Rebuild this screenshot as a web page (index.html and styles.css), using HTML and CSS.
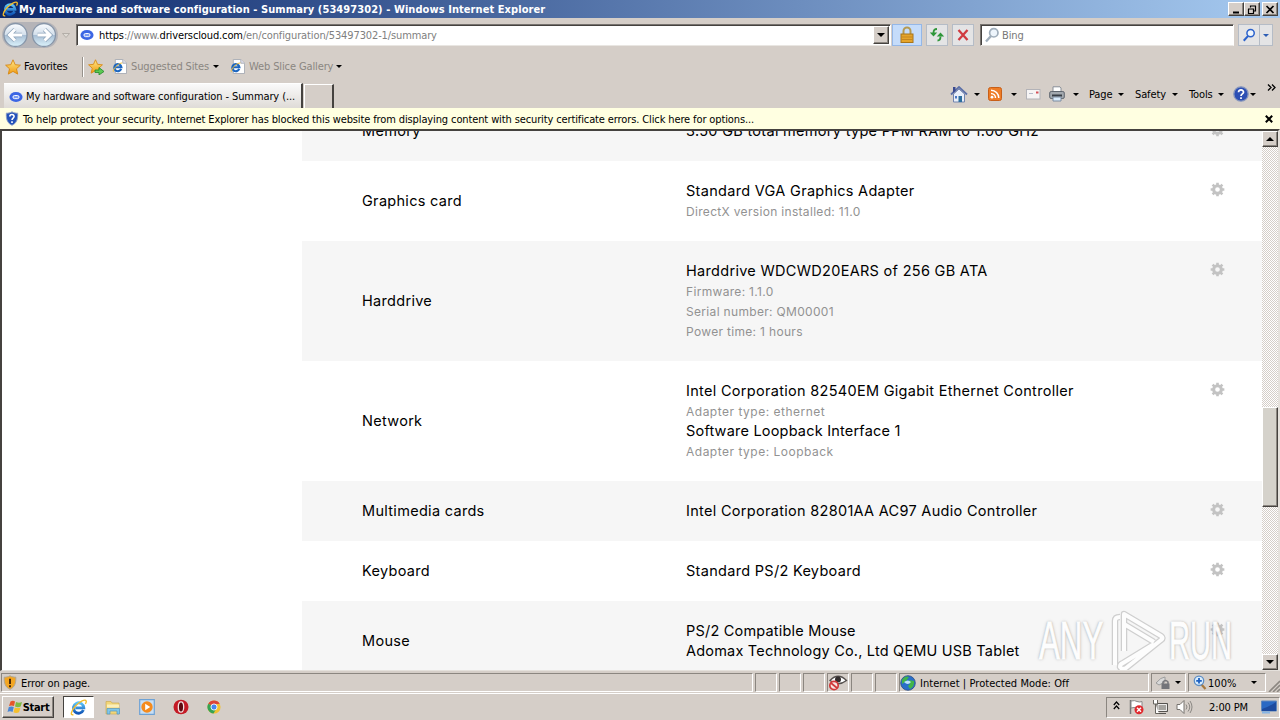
FILE: index.html
```html
<!DOCTYPE html>
<html lang="en">
<head>
    <meta charset="UTF-8">
    <title>My hardware and software configuration - Summary (53497302)</title>
    <link rel="stylesheet" href="styles.css">
</head>
<body>
    <svg class="defs" width="0" height="0">
        <defs>
            <linearGradient id="sky" x1="0" y1="0" x2="0" y2="1">
                <stop offset="0" stop-color="#5cc4f8"/><stop offset="1" stop-color="#1257b8"/>
            </linearGradient>
            <linearGradient id="ball" x1="0" y1="0" x2="0" y2="1">
                <stop offset="0" stop-color="#fbfdff"/><stop offset=".48" stop-color="#d3dfeb"/><stop offset=".52" stop-color="#a9bfd5"/><stop offset="1" stop-color="#dcf3fc"/>
            </linearGradient>
            <linearGradient id="gold" x1="0" y1="0" x2="0" y2="1">
                <stop offset="0" stop-color="#ffe98a"/><stop offset="1" stop-color="#f09a10"/>
            </linearGradient>
        </defs>
        <symbol id="ie" viewBox="0 0 16 16">
            <path d="M12.600 10.400A4.900 4.900 0 1 1 13 8.300H5" fill="none" stroke="url(#sky)" stroke-width="2.700"/>
            <path d="M3.200 14.600C.2 16 .6 11.500 5 6.800 9.200 2.300 14.500-.2 15.200 1.800c.3.8-.1 1.900-.7 2.900" fill="none" stroke="#f3bd2c" stroke-width="1.300"/>
        </symbol>
        <symbol id="iepage" viewBox="0 0 16 16">
            <path d="M3.500.5h8l4 4v11h-12z" fill="#fff" stroke="#a9adb4"/>
            <path d="M11.500.5v4h4" fill="#dde" stroke="#a9adb4"/>
            <path d="M9.800 10.600A3.800 3.800 0 1 1 10 8.800H3" fill="none" stroke="#1c66c0" stroke-width="2.300"/>
            <path d="M1.500 13.500C0 12.500 6 4.200 11 4.200" fill="none" stroke="#f3bd2c"/>
        </symbol>
        <symbol id="cloud" viewBox="0 0 16 12">
            <ellipse cx="8" cy="6" rx="7.500" ry="5.800" fill="#3c66e4"/>
            <rect x="4.500" y="4.300" width="7" height="3.600" rx="1.800" fill="#7e9df2" stroke="#fff" stroke-width="1.100"/>
        </symbol>
        <symbol id="star" viewBox="0 0 16 16">
            <path d="M8 .8l2.200 4.900 5.200.5-3.900 3.600 1.200 5.300L8 12.400l-4.700 2.700 1.200-5.300L.6 6.200l5.200-.5z" fill="url(#gold)" stroke="#d78712" stroke-width=".9"/>
        </symbol>
        <symbol id="shield" viewBox="0 0 14 16">
            <path d="M7 .8C9 2 11 2.400 13.200 2.300 13.500 8.500 12 13 7 15.300 2 13 .5 8.500.8 2.300 3 2.400 5 2 7 .8z" fill="#2453ba" stroke="#98a8c6"/>
            <path d="M4.700 5.800C4.800 3 9.400 3.200 9.200 5.900 9.100 7.500 7 7.600 7 9.500M7 11v1.700" fill="none" stroke="#fff" stroke-width="1.700"/>
        </symbol>
        <symbol id="gear" viewBox="0 0 16 16">
            <path d="M8 .7v3.600M8 11.700v3.600M.7 8h3.600M11.700 8h3.600M2.800 2.800l2.600 2.600M10.600 10.600l2.600 2.600M13.200 2.800l-2.600 2.600M5.400 10.600l-2.600 2.600" stroke="#c3c3c3" stroke-width="2.800"/>
            <circle cx="8" cy="8" r="4.100" fill="none" stroke="#c3c3c3" stroke-width="3.200"/>
        </symbol>
        <symbol id="glass" viewBox="0 0 16 16">
            <path d="M2 14.500L7 9" stroke-width="2.400" stroke="currentColor"/>
            <circle cx="9.800" cy="5.800" r="4.200" fill="#eef5fc" stroke="currentColor" stroke-width="1.700"/>
        </symbol>
    </svg>

    <div class="titlebar">
        <svg class="title-icon" width="16" height="16"><use href="#ie"/></svg>
        <span class="title-text">My hardware and software configuration - Summary (53497302) - Windows Internet Explorer</span>
        <div class="window-buttons">
            <button class="win"><svg width="12" height="11"><path d="M3 8.500h6" stroke="#000" stroke-width="2"/></svg></button>
            <button class="win"><svg width="12" height="11"><path d="M4 2h6M4.500 1.500v2M9.500 2v5H8M2 5h6M2.500 5v4.500h5V5" fill="none" stroke="#000" stroke-width="1.200"/></svg></button>
            <button class="win close"><svg width="12" height="11"><path d="M2.500 2l7 7M9.500 2l-7 7" stroke="#000" stroke-width="1.700"/></svg></button>
        </div>
    </div>

    <div class="address-row">
        <svg class="nav" width="72" height="28" viewBox="0 0 72 28">
            <path d="M14 1h30a13 13 0 0 1 0 26H14a13 13 0 0 1 0-26" fill="#b5b4b8"/>
            <circle cx="14.500" cy="14" r="11.500" fill="url(#ball)" stroke="#8796a9" stroke-width="1.300"/>
            <circle cx="43" cy="14" r="11.500" fill="url(#ball)" stroke="#8796a9" stroke-width="1.300"/>
            <path d="M21 14H9M14 8.500L8.500 14l5.500 5.500M36.500 14h12M43.500 8.500L49 14l-5.500 5.500" fill="none" stroke="#8fa5bb" stroke-width="4.500"/>
            <path d="M21 14H9M14 8.500L8.500 14l5.500 5.500M36.500 14h12M43.500 8.500L49 14l-5.500 5.500" fill="none" stroke="#fff" stroke-width="3"/>
            <path d="M61.500 12.500h7l-3.500 4z" fill="#dedad4" stroke="#aaa59e" stroke-width=".8"/>
        </svg>
        <div class="address">
            <svg width="14" height="12"><use href="#cloud"/></svg>
            <span class="url"><b>https</b>://www.<b>driverscloud.com</b>/en/configuration/53497302-1/summary</span>
            <button class="drop"><i class="arrow"></i></button>
        </div>
        <div class="tool lock">
            <svg width="16" height="18"><path d="M4.500 9V5a3.500 3.500 0 0 1 7 0v4" fill="none" stroke="#b59a52" stroke-width="2"/><rect x="2" y="8" width="12" height="8.500" fill="#e5a42a" stroke="#a8751a"/><path d="M2 11h12M2 13.500h12" stroke="#c58720"/></svg>
        </div>
        <div class="tool">
            <svg width="16" height="16"><path d="M8 2Q4.500 2 4.500 6" fill="none" stroke="#2f963a" stroke-width="1.800"/><path d="M.8 5.500h7.400L4.500 9.500zM7.800 9.500h7.400L11.500 5.500z" fill="#2f963a"/><path d="M8.500 13.500q3 0 3-4" fill="none" stroke="#2f963a" stroke-width="1.800"/></svg>
        </div>
        <div class="tool">
            <svg width="16" height="16"><path d="M3.500 3l9 10M12.500 3l-9 10" stroke="#d03a40" stroke-width="2.300"/></svg>
        </div>
        <div class="search">
            <svg class="pale" width="16" height="18" viewBox="0 0 16 16"><use href="#glass"/></svg>
            <span>Bing</span>
        </div>
        <div class="tool go"><svg width="14" height="14" viewBox="0 0 16 16"><use href="#glass"/></svg></div>
        <div class="tool go-drop"><i class="arrow blue"></i></div>
    </div>

    <div class="favorites-row">
        <svg width="16" height="16"><use href="#star"/></svg>
        <span class="fav">Favorites</span>
        <i class="divider"></i>
        <svg class="add" width="17" height="16"><use href="#star" width="15" height="15"/><path d="M7 11h4V8.500l5 4-5 3.500v-2.500H7z" fill="#5cc953" stroke="#238a2c" stroke-width=".8"/></svg>
        <svg class="page-icon" width="15" height="15"><use href="#iepage"/></svg>
        <span class="link suggested">Suggested Sites</span><i class="arrow"></i>
        <svg class="page-icon second" width="15" height="15"><use href="#iepage"/></svg>
        <span class="link slice">Web Slice Gallery</span><i class="arrow"></i>
    </div>

    <div class="tab-row">
        <div class="tab">
            <svg width="14" height="12"><use href="#cloud"/></svg>
            <span>My hardware and software configuration - Summary (...</span>
        </div>
        <div class="new-tab"></div>
        <div class="commands">
            <svg width="18" height="17"><path d="M3.500 8v8h11V8L9 3z" fill="#e9effa" stroke="#7284ae"/><path d="M1 8.500L9 1l8 7.500" fill="none" stroke="#5c70a8" stroke-width="1.800"/><path d="M3 1h2.500v4L3 7z" fill="#39498f"/><path d="M8.500 10h3.500v6H8.500z" fill="#2d6e9e"/><path d="M5 10h2v2.500H5z" fill="#4a78c4"/></svg>
            <i class="arrow"></i>
            <svg class="rss" width="14" height="14"><rect x=".5" y=".5" width="13" height="13" rx="2" fill="#ee7c26" stroke="#c85f18"/><circle cx="4" cy="10.200" r="1.400" fill="#fff"/><path d="M3 6.500a4.500 4.500 0 0 1 4.500 4.500M3 3.200A7.800 7.800 0 0 1 10.800 11" fill="none" stroke="#fff" stroke-width="1.500"/></svg>
            <i class="arrow"></i>
            <svg class="mail" width="15" height="11"><rect x=".5" y=".5" width="13.500" height="9.500" fill="#f6f4f4" stroke="#b3b3b8"/><path d="M10 2.500h2.500v2H10z" fill="#d55058"/><path d="M3 4.500h4" stroke="#b5b9c8"/></svg>
            <svg class="printer" width="16" height="16"><path d="M4 6V.8h7l1 1.200v4" fill="#fff" stroke="#888e96"/><rect x=".7" y="5.500" width="14.600" height="7" rx="1.500" fill="#a2a8ae" stroke="#5f666f"/><path d="M3 9.500h10" stroke="#373d45" stroke-width="2"/><path d="M4 11h8v4H4z" fill="#d8eafa" stroke="#7c8ca0"/></svg>
            <i class="arrow"></i>
            <span class="menu page">Page</span><i class="arrow"></i>
            <span class="menu safety">Safety</span><i class="arrow"></i>
            <span class="menu tools">Tools</span><i class="arrow"></i>
            <svg class="help" width="16" height="16"><circle cx="8" cy="8" r="7.200" fill="#2c4fb4" stroke="#8796bc" stroke-width="1.300"/><path d="M5.500 6.300C5.500 3 10.700 3.300 10.500 6.300 10.300 8 8 7.800 8 10M8 11.300v1.700" fill="none" stroke="#fff" stroke-width="1.700"/></svg>
            <i class="arrow"></i>
        </div>
        <svg class="more" width="9" height="7"><path d="M1 .5l3 3-3 3M5 .5l3 3-3 3" fill="none" stroke="#000" stroke-width="1.300"/></svg>
    </div>

    <div class="infobar">
        <svg width="14" height="15" viewBox="0 0 14 16"><use href="#shield"/></svg>
        <span>To help protect your security, Internet Explorer has blocked this website from displaying content with security certificate errors. Click here for options...</span>
        <svg class="dismiss" width="8" height="8"><path d="M.8.8l6.400 6.400M7.200.8L.8 7.200" stroke="#000" stroke-width="2"/></svg>
    </div>

    <div class="viewport">
        <div class="report">
            <div class="row odd first">
                <div class="label">Memory</div>
                <div class="value"><p>3.50 GB total memory type PPM RAM to 1.00 GHz</p></div>
                <svg width="15" height="15"><use href="#gear"/></svg>
            </div>
            <div class="row">
                <div class="label">Graphics card</div>
                <div class="value"><p>Standard VGA Graphics Adapter</p><small>DirectX version installed: 11.0</small></div>
                <svg width="15" height="15"><use href="#gear"/></svg>
            </div>
            <div class="row odd">
                <div class="label">Harddrive</div>
                <div class="value"><p>Harddrive WDCWD20EARS of 256 GB ATA</p><small>Firmware: 1.1.0</small><small>Serial number: QM00001</small><small>Power time: 1 hours</small></div>
                <svg width="15" height="15"><use href="#gear"/></svg>
            </div>
            <div class="row">
                <div class="label">Network</div>
                <div class="value"><p>Intel Corporation 82540EM Gigabit Ethernet Controller</p><small class="wide">Adapter type: ethernet</small><p class="tight">Software Loopback Interface 1</p><small class="wide">Adapter type: Loopback</small></div>
                <svg width="15" height="15"><use href="#gear"/></svg>
            </div>
            <div class="row odd">
                <div class="label">Multimedia cards</div>
                <div class="value"><p>Intel Corporation 82801AA AC97 Audio Controller</p></div>
                <svg width="15" height="15"><use href="#gear"/></svg>
            </div>
            <div class="row">
                <div class="label">Keyboard</div>
                <div class="value"><p>Standard PS/2 Keyboard</p></div>
                <svg width="15" height="15"><use href="#gear"/></svg>
            </div>
            <div class="row odd">
                <div class="label">Mouse</div>
                <div class="value"><p class="tight">PS/2 Compatible Mouse</p><p class="tight">Adomax Technology Co., Ltd QEMU USB Tablet</p></div>
                <svg width="15" height="15"><use href="#gear"/></svg>
            </div>
        </div>
        <div class="scrollbar">
            <button class="scroll"><i class="arrow up"></i></button>
            <div class="thumb"></div>
            <button class="scroll end"><i class="arrow big"></i></button>
        </div>
        <div class="watermark">
            <span>ANY</span>
            <svg width="58" height="64" viewBox="0 0 58 64">
                <path d="M6 56V12q0-4 5-4M15 42V5l37 22q3 2 0 4L17 59q-4 2-6-1 0-3 3-4l31-19M15 15l30 18" fill="none" stroke="#c9c9c9" stroke-width="6.500" stroke-linejoin="round"/>
                <path d="M6 56V12q0-4 5-4M15 42V5l37 22q3 2 0 4L17 59q-4 2-6-1 0-3 3-4l31-19M15 15l30 18" fill="none" stroke="#fff" stroke-width="4" stroke-linejoin="round"/>
            </svg>
            <span class="run">RUN</span>
        </div>
    </div>

    <div class="statusbar">
        <div class="pane message">
            <svg width="14" height="15" viewBox="0 0 14 16"><path d="M7 .8C9 2 11 2.400 13.200 2.300 13.500 8.500 12 13 7 15.300 2 13 .5 8.500.8 2.300 3 2.400 5 2 7 .8z" fill="#f3a623" stroke="#aaa396"/><path d="M7 4v5.500M7 11v2" stroke="#402408" stroke-width="2"/></svg>
            <span>Error on page.</span>
        </div>
        <div class="pane small"></div>
        <div class="pane small"></div>
        <div class="pane small"></div>
        <div class="pane small">
            <svg width="20" height="17"><path d="M2 6.500Q10-2 18.500 6.500 10 13 2 6.500z" fill="#fff" stroke="#55504e" stroke-width="1.300"/><circle cx="10" cy="5.500" r="3" fill="#332d2d"/><circle cx="6" cy="11.500" r="4.200" fill="#f6e5e3" stroke="#d1393a" stroke-width="1.700"/><path d="M3 9l6 5" stroke="#d1393a" stroke-width="1.700"/></svg>
        </div>
        <div class="pane small"></div>
        <div class="pane small"></div>
        <div class="pane zone">
            <svg width="16" height="16"><circle cx="8" cy="8" r="7.300" fill="#2a6fc9" stroke="#2d4d82" stroke-width=".8"/><path d="M2 5Q5 0 9 2L6 6l-4 3zM9 5l5 1q1 5-4 8l-2-3 2-2z" fill="#42b549"/><path d="M4 7q4-3 7 0-3 4-7 0" fill="#bde4f8"/></svg>
            <span>Internet | Protected Mode: Off</span>
        </div>
        <div class="pane privacy">
            <svg width="18" height="16"><path d="M2 8Q7 2 11 2v5L5 10z" fill="#d9d9d9" stroke="#9d9d9d"/><path d="M9 9V7q2.500-3 5 0v2" fill="none" stroke="#77777c" stroke-width="1.500"/><path d="M7.500 8.500h8V14h-8z" fill="#73747a"/></svg>
            <i class="arrow"></i>
        </div>
        <div class="pane zoom">
            <svg width="14" height="15"><path d="M8 9l4.500 5" stroke="#a8793e" stroke-width="2.200"/><circle cx="6" cy="5.800" r="4.700" fill="#d8ecfc" stroke="#5d8dc4" stroke-width="1.300"/><path d="M6 3v5.600M3.200 5.800h5.600" stroke="#1d60c2" stroke-width="1.800"/></svg>
            <span>100%</span>
            <i class="arrow"></i>
        </div>
        <svg class="grip" width="12" height="12"><path d="M1 12L12 1M5 12l7-7M9 12l3-3" stroke="#8c8781" stroke-width="1.600"/></svg>
    </div>

    <div class="taskbar">
        <button class="start">
            <svg width="16" height="16"><path d="M3.500 2.500Q6 1 8 2.500L7 7Q4.500 5.800 2 7z" fill="#e5562b"/><path d="M9 3q3 1.500 6 0l-1.300 4.500Q11 8.800 8 7.500z" fill="#7dbb42"/><path d="M1.800 8Q4.500 6.800 6.800 8L5.500 13Q3 11.700.5 13z" fill="#4a86d4"/><path d="M7.800 8.500q3 1.200 5.700 0L12 13.300Q9 14.700 6.500 13.300z" fill="#f5bf2c"/></svg>
            <span>Start</span>
        </button>
        <div class="task"><svg width="17" height="17"><use href="#ie"/></svg></div>
        <svg class="app" width="16" height="16"><path d="M1 2.500h5l1 1.500h7v11H1z" fill="#f2d678" stroke="#cfae55" stroke-width=".7"/><path d="M2 5.500h12v3H2z" fill="#fbefba"/><path d="M2 15V9.500h12.500V15H12v-3H5v3z" fill="#7fc6ea" stroke="#5596c0" stroke-width=".7"/></svg>
        <svg class="app" width="16" height="16"><path d="M.7.7h14.600v14.600H.7z" fill="#c8dff5" stroke="#6ea2d5" stroke-width="1.200"/><circle cx="8" cy="8" r="5.700" fill="#f58b1e"/><path d="M6.200 4.700v6.600l5-3.300z" fill="#fff"/></svg>
        <svg class="app" width="16" height="16"><ellipse cx="8" cy="8" rx="7.500" ry="7.300" fill="#c41a25"/><ellipse cx="8" cy="8" rx="2.700" ry="5.200" fill="#5d0a10" stroke="#f4e4e4" stroke-width="1.300"/></svg>
        <svg class="app" width="14" height="14" viewBox="0 0 16 16"><circle cx="8" cy="8" r="7.500" fill="#f1c232"/><path d="M8 8L1.500 4.200A7.500 7.500 0 0 1 14.500 4.200L8 5z" fill="#dc4437"/><path d="M1.500 4.200A7.500 7.500 0 0 0 7.500 15.500L10.500 10 8 8z" fill="#35a354"/><circle cx="8" cy="8" r="3.500" fill="#4787ee" stroke="#fff"/></svg>
        <div class="tray">
            <svg class="chevrons" width="7" height="9"><path d="M.8 4l2.700-3 2.700 3M.8 8l2.700-3 2.700 3" fill="none" stroke="#000" stroke-width="1.200"/></svg>
            <svg class="flag" width="17" height="16"><path d="M2.500 1v14" stroke="#777" stroke-width="1.500"/><path d="M3 2q4-1 6 .5 3 1 5 0V9q-3 1-5 0-3-1-6 0z" fill="#fff" stroke="#888"/><circle cx="11" cy="10.800" r="4.500" fill="#e0292e"/><path d="M9 8.800l4 4M13 8.800l-4 4" stroke="#fff" stroke-width="1.400"/></svg>
            <svg class="net" width="17" height="16"><path d="M5 4.500h10.500v8H5zM7 14.500h7" fill="#a5a39f" stroke="#55524f"/><path d="M6 5.500h8.500v6H6z" fill="none" stroke="#fff" stroke-width=".8"/><path d="M1.500 1v4h4V1M3.500 5v9.500H7" fill="#fff" stroke="#67645f"/></svg>
            <svg class="sound" width="17" height="16"><path d="M1 5.500h3L8 1.500v13l-4-4H1z" fill="#fff" stroke="#77736f"/><path d="M10 5.500q2 2.500 0 5M12 3.500q3.500 4.500 0 9M14 2q4 6 0 12" fill="none" stroke="#8a8783"/></svg>
            <span>2:00 PM</span>
            <svg class="desktop" width="16" height="14"><path d="M.5 1h15v10H.5z" fill="#2a69c4" stroke="#6088bc"/><path d="M1 9Q8 7 15 2v9H1z" fill="#1d4b9f"/><path d="M1 12.500h8" stroke="#87b5e5" stroke-width="2"/></svg>
        </div>
    </div>
</body>
</html>
```
FILE: styles.css
```css
* {
    box-sizing: border-box;
}
body {
    margin: 0;
    width: 1280px;
    height: 720px;
    overflow: hidden;
    display: flex;
    flex-direction: column;
    background-color: #d5cec8;
    color: #000;
    font-family: "DejaVu Sans Condensed", "DejaVu Sans", sans-serif;
    font-stretch: condensed;
    font-size: 11px;
    letter-spacing: -0.12px;
    line-height: 14px;
    white-space: nowrap;
}
svg {
    display: block;
    flex: none;
}
.defs {
    position: absolute;
}
button {
    padding: 0;
    color: #000;
    font: inherit;
    letter-spacing: inherit;
    background-color: #d5cec8;
    border: 1px solid;
    border-color: #fff #45423f #45423f #fff;
    box-shadow: inset -1px -1px #8b8680;
    display: flex;
    align-items: center;
    justify-content: center;
    flex: none;
}
.arrow {
    flex: none;
    border: 3px solid transparent;
    border-top-color: #000;
    border-bottom: 0;
}
.arrow.blue {
    border-top-color: #2d5db4;
}
.arrow.big {
    border-width: 4px 4px 0;
}
.arrow.up {
    border: 4px solid transparent;
    border-bottom-color: #000;
    border-top: 0;
}

/* title bar */
.titlebar {
    flex: none;
    height: 18px;
    display: flex;
    align-items: center;
    padding: 0 2px;
    color: #fff;
    background: linear-gradient(to right, #0d296c, #a6caf0);
}
.title-icon {
    margin-right: 1px;
}
.title-text {
    padding-top: 2px;
    font-weight: bold;
    letter-spacing: 0.07px;
}
.window-buttons {
    display: flex;
    margin-left: auto;
}
.win {
    width: 16px;
    height: 14px;
}
.close {
    margin-left: 2px;
}

/* address row */
.address-row {
    flex: none;
    height: 34px;
    display: flex;
    align-items: center;
    padding-left: 1px;
}
.nav {
    margin: 0 3px 0 0;
}
.address, .search {
    height: 22px;
    background-color: #fff;
    border: 1px solid;
    border-color: #77736f #fff #e9e6e2 #77736f;
    box-shadow: inset 1px 1px #45423f;
    display: flex;
    align-items: center;
}
.address {
    width: 815px;
    padding: 0 1px 0 3px;
}
.url {
    padding-top: 2px;
    margin-left: 5px;
    color: #808080;
}
.url b {
    color: #000;
    font-weight: normal;
}
.drop {
    width: 16px;
    height: 18px;
    margin-left: auto;
}
.drop .arrow {
    border-width: 4px 4px 0;
}
.tool {
    flex: none;
    width: 22px;
    height: 22px;
    margin-left: 4px;
    border: 1px solid #b5bcc6;
    background-color: #e4e4e5;
    display: flex;
    align-items: center;
    justify-content: center;
}
.lock {
    width: 30px;
    margin-left: 1px;
    background-color: #c5dcfa;
    border-color: #94b7e7;
}
.search {
    width: 254px;
    margin-left: 6px;
    padding-left: 3px;
    color: #777;
}
.search span {
    padding-top: 2px;
    margin-left: 2px;
}
.pale {
    color: #a0aebb;
}
.go {
    color: #2b62cc;
}
.go-drop {
    width: 13px;
    margin-left: 0;
    border-left: 0;
}

/* favorites bar */
.favorites-row {
    flex: none;
    height: 31px;
    display: flex;
    align-items: center;
    padding: 0 0 2px 5px;
}
.fav {
    width: 58px;
    margin-left: 3px;
}
.divider {
    width: 2px;
    height: 20px;
    border-left: 1px solid #96918b;
    border-right: 1px solid #fff;
}
.add {
    margin-left: 4px;
}
.page-icon {
    margin-left: 7px;
}
.second {
    margin-left: 11px;
}
.link {
    padding-top: 1px;
    color: #8a8681;
    margin-left: 4px;
}
.suggested {
    width: 82px;
}
.slice {
    width: 87px;
}

/* tabs and command bar */
.tab-row {
    flex: none;
    height: 25px;
    display: flex;
    align-items: flex-end;
    padding-left: 4px;
}
.tab {
    width: 299px;
    height: 25px;
    padding: 2px 0 0 5px;
    display: flex;
    align-items: center;
    background: linear-gradient(#fafafa, #dfdbd7);
    border-right: 2px solid #45423f;
    border-top: 1px solid #fff;
}
.tab span {
    margin-left: 3px;
    letter-spacing: -0.1px;
}
.new-tab {
    width: 30px;
    height: 24px;
    margin-left: 1px;
    border: 1px solid #fff;
    border-bottom: 0;
    border-right: 2px solid #45423f;
}
.commands {
    height: 25px;
    margin-left: auto;
    display: flex;
    align-items: center;
    padding-bottom: 3px;
}
.commands .arrow {
    margin-left: 6px;
}
.rss {
    margin-left: 8px;
}
.commands .rss + .arrow {
    margin-left: 9px;
}
.mail {
    margin-left: 9px;
}
.printer {
    margin: 0 2px 0 8px;
}
.menu {
    padding-top: 1px;
    margin-left: 10px;
}
.commands .menu + .arrow {
    margin-left: 2px;
}
.page {
    width: 27px;
}
.safety {
    width: 35px;
    margin-left: 11px;
}
.tools {
    width: 27px;
    margin-left: 11px;
}
.help {
    margin-left: 9px;
}
.commands .help + .arrow {
    margin-left: 1px;
}
.more {
    align-self: flex-start;
    margin: 1px 4px 0 11px;
}

/* security notice */
.infobar {
    flex: none;
    height: 21px;
    display: flex;
    align-items: center;
    padding: 0 7px 0 5px;
    background-color: #ffffe1;
}
.infobar span {
    padding-top: 2px;
    margin-left: 4px;
}
.dismiss {
    margin-left: auto;
}

/* page content */
.viewport {
    position: relative;
    flex: none;
    height: 542px;
    display: flex;
    overflow: hidden;
    background-color: #fff;
    border: solid #45423f;
    border-width: 2px 2px 1px 2px;
    border-right-color: #e5e1dc;
    border-bottom-color: #e5e1dc;
}
.report {
    width: 960px;
    margin-left: 300px;
    font-family: Inter, sans-serif;
    font-size: 14.5px;
    font-weight: 370;
    letter-spacing: 0.3px;
    line-height: 20px;
}
.row {
    display: flex;
    align-items: center;
    padding: 20px 37px 20px 60px;
}
.row svg {
    align-self: flex-start;
    margin-top: 1px;
}
.odd {
    background-color: #f6f6f6;
}
.first {
    margin-top: -30px;
}
.label {
    width: 324px;
}
.value {
    flex: 1;
}
.value p {
    margin: 0;
}
.value .tight {
    letter-spacing: 0.2px;
}
.value small {
    display: block;
    height: 20px;
    padding-top: 1px;
    color: #929292;
    font-size: 12px;
    letter-spacing: 0.32px;
}
.value .wide {
    letter-spacing: 0.5px;
}
.scrollbar {
    width: 16px;
    display: flex;
    flex-direction: column;
    background: repeating-conic-gradient(#d5cec8 0 25%, #fff 0 50%) 0 0 / 2px 2px;
}
.scroll {
    width: 16px;
    height: 16px;
}
.end {
    margin-top: auto;
}
.thumb {
    height: 100px;
    margin-top: 260px;
    background-color: #d5d2cb;
    border: 1px solid;
    border-color: #fff #45423f #45423f #fff;
    box-shadow: inset -1px -1px #8b8680;
}
.watermark {
    position: absolute;
    left: 1037px;
    top: 476px;
    display: flex;
    align-items: center;
    color: #fff;
    font-family: "Liberation Sans", sans-serif;
    font-size: 53px;
    line-height: 68px;
    letter-spacing: 0;
    text-shadow: 0 0 2px #888, 0 0 4px #aaa;
    -webkit-text-stroke: 1px #fff;
    opacity: 0.85;
}
.watermark span {
    display: block;
    width: 65px;
    transform: scaleX(0.59);
    transform-origin: left;
}
.watermark .run {
    transform: scaleX(0.55);
}
.watermark svg {
    margin-left: 5px;
    margin-right: 2px;
}

/* status bar */
.statusbar {
    flex: none;
    height: 23px;
    display: flex;
    align-items: center;
    padding: 2px 0 1px 1px;
    border-bottom: 1px solid #fff;
}
.pane {
    flex: none;
    height: 19px;
    display: flex;
    align-items: center;
    border: 1px solid;
    border-color: #8b8680 #fff #fff #8b8680;
    margin-right: 2px;
}
.pane span {
    padding-top: 2px;
    letter-spacing: 0.05px;
}
.message {
    width: 752px;
    padding-left: 1px;
}
.message span {
    margin-left: 4px;
    letter-spacing: -0.1px;
}
.small {
    width: 22px;
}
.zone {
    width: 250px;
}
.zone span {
    margin-left: 4px;
}
.privacy {
    width: 35px;
    padding-left: 2px;
}
.privacy .arrow {
    margin-left: 3px;
}
.zoom {
    width: 78px;
    padding-left: 4px;
}
.zoom span {
    width: 43px;
    margin-left: 1px;
}
.grip {
    align-self: flex-end;
}

/* taskbar */
.taskbar {
    flex: 1;
    display: flex;
    align-items: center;
    padding-left: 2px;
}
.start {
    width: 52px;
    height: 22px;
    font-weight: bold;
    letter-spacing: -0.3px;
}
.start span {
    padding-top: 1px;
}
.task {
    width: 31px;
    height: 22px;
    margin: 0 2px 0 9px;
    display: flex;
    align-items: center;
    justify-content: center;
    background-color: #fff;
    border: 1px solid;
    border-color: #45423f #fff #fff #45423f;
}
.app {
    margin: 0 9px;
}
.tray {
    width: 174px;
    height: 21px;
    margin: 0 0 0 auto;
    padding-left: 6px;
    display: flex;
    align-items: center;
    border: 1px solid;
    border-color: #8b8680 #fff #fff #8b8680;
}
.chevrons {
    margin-bottom: 3px;
}
.flag {
    margin-left: 8px;
}
.net, .sound {
    margin-left: 7px;
}
.tray span {
    padding-top: 1px;
    margin-left: 16px;
}
.desktop {
    margin: 0 2px 0 auto;
}
```
